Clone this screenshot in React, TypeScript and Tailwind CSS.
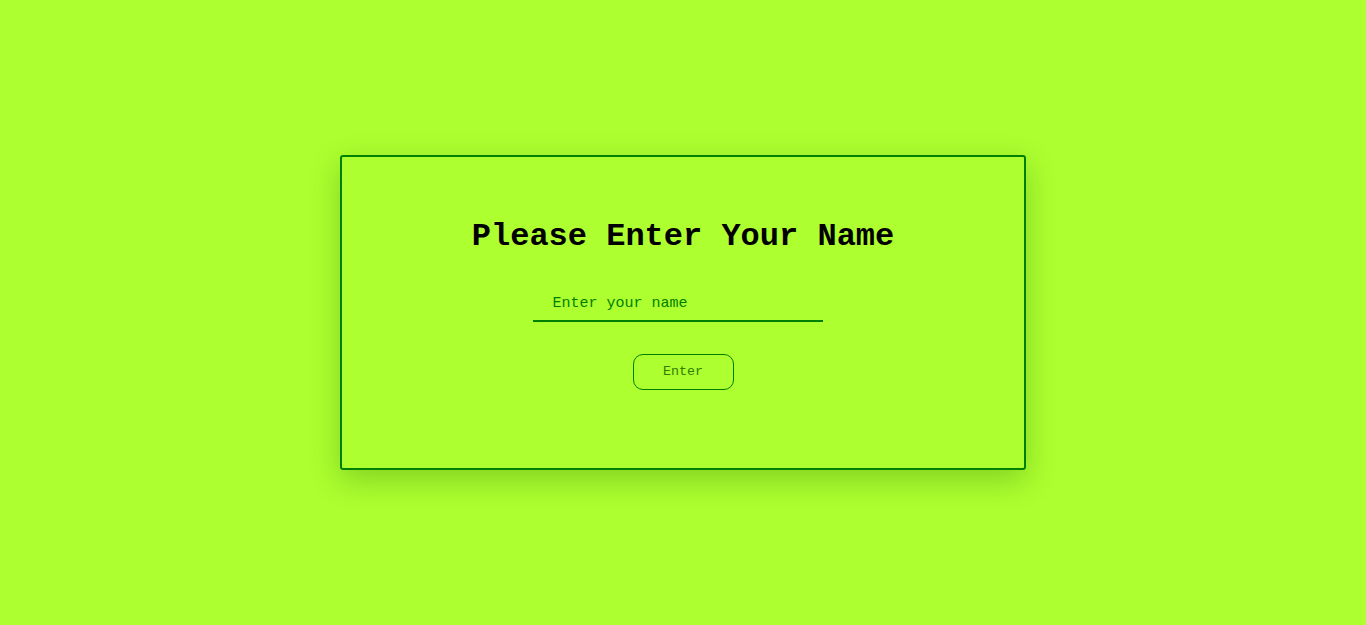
import React from "react";

export default function App() {
  return (
    <div className="min-h-[625px] h-screen w-full bg-[#adff2f] flex items-center justify-center" style={{ fontFamily: '"Liberation Mono", "Courier New", monospace' }}>
      <div className="w-[686px] h-[315px] border-2 border-[#008000] rounded-[3px] shadow-[0_10px_30px_rgba(0,80,0,0.25)] flex flex-col items-center pt-[62px]">
        <h1 className="text-[32px] font-bold text-black leading-[36px]">Please Enter Your Name</h1>
        <input
          type="text"
          placeholder="Enter your name"
          className="mt-[40px] mr-[11px] w-[290px] bg-transparent border-0 border-b-2 border-[#008000] outline-none pl-[20px] pb-[8px] text-[15px] leading-[17px] text-[#008000] placeholder:text-[#008000]"
        />
        <button className="mt-[32px] w-[101px] h-[36px] rounded-[10px] border border-[#008000] text-[13.33px] text-[#2f7d00] bg-transparent">Enter</button>
      </div>
    </div>
  );
}
